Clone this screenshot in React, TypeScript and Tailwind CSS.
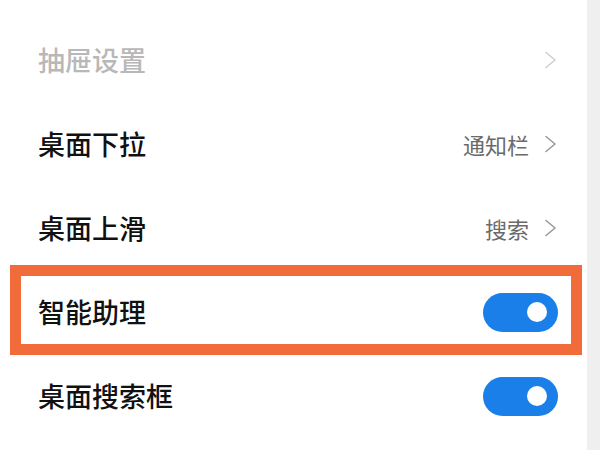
const font = { fontFamily: '"Noto Sans CJK SC", "Noto Sans", sans-serif' };

function Chevron({ light }: { light?: boolean }) {
  return (
    <svg width="13" height="18" viewBox="0 0 13 18" fill="none">
      <path
        d="M2 1.5 L11 9 L2 16.5"
        stroke={light ? '#cfcfcf' : '#9a9a9a'}
        strokeWidth="1.6"
        strokeLinecap="round"
        strokeLinejoin="round"
      />
    </svg>
  );
}

function Toggle() {
  return (
    <div className="flex items-center justify-end bg-[#1a7fe8] rounded-full w-[75px] h-[39px] pr-[11px]">
      <div className="bg-white rounded-full w-[20px] h-[20px]"></div>
    </div>
  );
}

export default function App() {
  return (
    <div className="flex bg-white w-[600px] h-[450px] overflow-hidden" style={font}>
      <div className="flex flex-col flex-1 pt-[18px]">
        {/* 抽屉设置 */}
        <div className="flex justify-between items-center pr-[30px] pl-[38px] h-[84px]">
          <span className="font-medium text-[#b8b8b8] text-[27px]">抽屉设置</span>
          <Chevron light />
        </div>

        {/* 桌面下拉 */}
        <div className="flex justify-between items-center pr-[30px] pl-[38px] h-[84px]">
          <span className="font-medium text-[#111] text-[27px]">桌面下拉</span>
          <div className="flex items-center gap-[15px]">
            <span className="text-[#6a6a6a] text-[22px]">通知栏</span>
            <Chevron />
          </div>
        </div>

        {/* 桌面上滑 */}
        <div className="flex justify-between items-center pr-[30px] pl-[38px] h-[84px]">
          <span className="font-medium text-[#111] text-[27px]">桌面上滑</span>
          <div className="flex items-center gap-[15px]">
            <span className="text-[#6a6a6a] text-[22px]">搜索</span>
            <Chevron />
          </div>
        </div>

        {/* 智能助理 (highlighted) */}
        <div className="relative flex justify-between items-center pr-[29px] pl-[38px] h-[84px]">
          <span className="font-medium text-[#111] text-[27px]">智能助理</span>
          <Toggle />
          <div className="top-[-5px] left-[10px] absolute border-[#f26b3a] border-[11px] w-[572px] h-[90px]"></div>
        </div>

        {/* 桌面搜索框 */}
        <div className="flex justify-between items-center pr-[29px] pl-[38px] h-[84px]">
          <span className="font-medium text-[#111] text-[27px]">桌面搜索框</span>
          <Toggle />
        </div>
      </div>
      <div className="bg-[#efefef] w-[13px]"></div>
    </div>
  );
}
